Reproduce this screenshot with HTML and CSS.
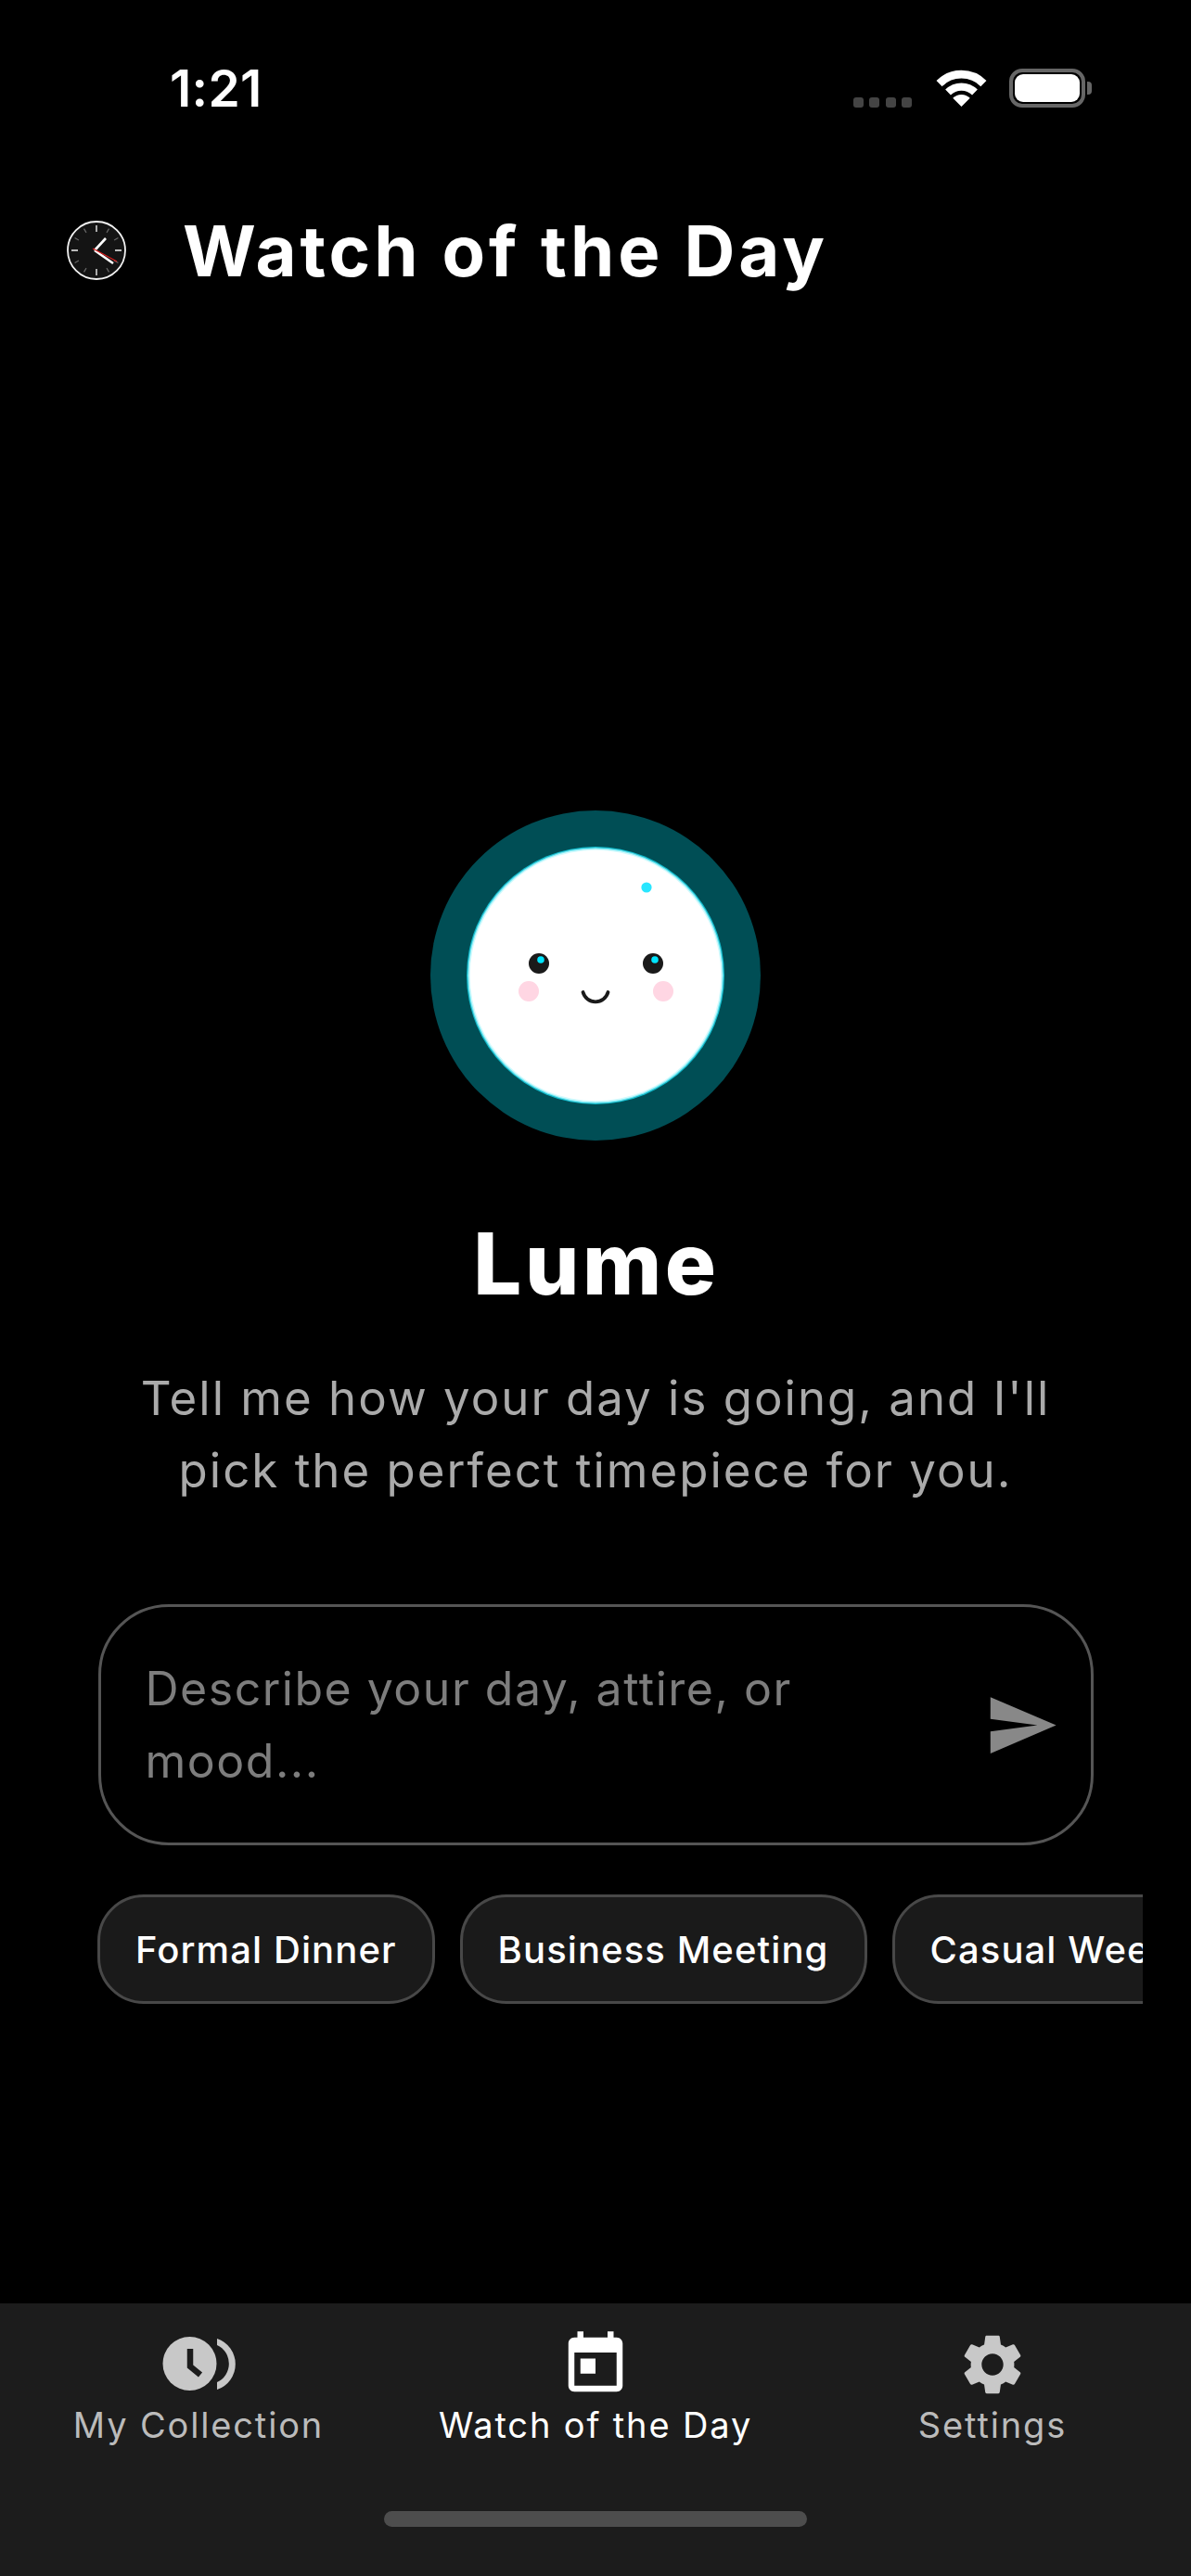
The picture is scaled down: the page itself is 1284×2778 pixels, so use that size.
FILE: index.html
```html
<!DOCTYPE html>
<html lang="en">
<head>
  <meta charset="UTF-8" />
  <meta name="viewport" content="width=device-width, initial-scale=1.0" />
  <title>Watch of the Day</title>
  <link rel="stylesheet" href="styles.css">
</head>
<body>
  <div class="app">
    <!-- status bar -->
    <div class="status">
      <span class="status-time">1:21</span>
      <div class="status-right">
        <div class="signal"><span></span><span></span><span></span><span></span></div>
        <svg class="wifi" viewBox="0 0 55 40">
          <path d="M4.2 15.7A33 33 0 0 1 50.8 15.7" fill="none" stroke="#fff" stroke-width="8.5"/>
          <path d="M13.4 24.9A20 20 0 0 1 41.6 24.9" fill="none" stroke="#fff" stroke-width="8"/>
          <path d="M27.5 40L18.5 31A12.7 12.7 0 0 1 36.5 31Z" fill="#fff"/>
        </svg>
        <div class="battery"><div class="battery-fill"></div></div>
        <div class="battery-tip"></div>
      </div>
    </div>

    <!-- header -->
    <header class="topbar">
      <svg class="clock" viewBox="0 0 64 64">
        <circle cx="32" cy="32" r="31" fill="#141414" stroke="#f2f2f2" stroke-width="1.8"/>
        <g stroke="#bbb" stroke-width="1.8">
          <path d="M32 5v7M32 52v7M5 32h7M52 32h7"/>
        </g>
        <g stroke="#666" stroke-width="1.2">
          <path d="M45.5 8.6l-2.5 4.3M55.4 18.5l-4.3 2.5M55.4 45.5l-4.3-2.5M45.5 55.4l-2.5-4.3M18.5 55.4l2.5-4.3M8.6 45.5l4.3-2.5M8.6 18.5l4.3 2.5M18.5 8.6l2.5 4.3"/>
        </g>
        <path d="M30 32L42 19" stroke="#fff" stroke-width="2.6"/>
        <path d="M30 32L50 46" stroke="#fff" stroke-width="2.6"/>
        <path d="M28 30L54 44" stroke="#e02020" stroke-width="1.1"/>
      </svg>
      <h1>Watch of the Day</h1>
    </header>

    <main class="content">
      <svg class="avatar" viewBox="0 0 356 356">
        <circle cx="178" cy="178" r="178" fill="#004e55"/>
        <circle cx="178" cy="178" r="139" fill="#12b9ca"/>
        <circle cx="178" cy="178" r="137.800" fill="#7feaf4"/>
        <circle cx="178" cy="178" r="136.600" fill="#d4fafd"/>
        <circle cx="178" cy="178" r="135.200" fill="#fff"/>
        <circle cx="233" cy="83" r="5.6" fill="#29e6ff"/>
        <circle cx="117" cy="165" r="11" fill="#1a1a1a"/>
        <circle cx="240" cy="165" r="11" fill="#1a1a1a"/>
        <circle cx="119" cy="161" r="3.8" fill="#00e5ff"/>
        <circle cx="242" cy="161" r="3.8" fill="#00e5ff"/>
        <circle cx="106" cy="195" r="11" fill="#ffd6e3"/>
        <circle cx="251" cy="195" r="11" fill="#ffd6e3"/>
        <path d="M164.500 196A14 14 0 0 0 191.500 196" fill="none" stroke="#1a1a1a" stroke-width="3.800" stroke-linecap="round"/>
      </svg>
      <h2 class="name">Lume</h2>
      <p class="intro">Tell me how your day is going, and I'll<br>pick the perfect timepiece for you.</p>

      <div class="prompt">
        <div class="prompt-text">Describe your day, attire, or<br>mood...</div>
        <svg class="send" viewBox="0 0 24 24"><path d="M2.01 21L23 12 2.01 3 2 10l15 2-15 2z"/></svg>
      </div>

      <div class="chips">
        <button class="chip">Formal Dinner</button>
        <button class="chip">Business Meeting</button>
        <button class="chip">Casual Weekend</button>
      </div>
    </main>

    <!-- bottom tabs -->
    <nav class="tabbar">
      <div class="tabs">
        <a class="tab" href="#">
          <svg class="tab-icon" viewBox="0 0 84 78">
            <circle cx="32.500" cy="38" r="29"/>
            <path d="M62 11A29 29 0 0 1 62 66V58A22 22 0 0 0 62 18Z"/>
            <path class="hands" d="M33 22V41L44 50"/>
          </svg>
          <span>My Collection</span>
        </a>
        <a class="tab active" href="#">
          <svg class="tab-icon" viewBox="0 0 24 24"><path d="M19 3h-1V1h-2v2H8V1H6v2H5c-1.110 0-1.990.9-1.990 2L3 19c0 1.100.89 2 2 2h14c1.100 0 2-.9 2-2V5c0-1.100-.9-2-2-2zm0 16H5V8h14v11zM7 10h5v5H7z"/></svg>
          <span>Watch of the Day</span>
        </a>
        <a class="tab" href="#">
          <svg class="tab-icon" viewBox="0 0 24 24"><path d="M19.14,12.94c0.04-0.3,0.06-0.61,0.06-0.94c0-0.32-0.02-0.64-0.07-0.94l2.03-1.58c0.18-0.14,0.23-0.41,0.12-0.61 l-1.92-3.32c-0.12-0.22-0.37-0.29-0.59-0.22l-2.39,0.96c-0.5-0.38-1.03-0.7-1.62-0.94L14.4,2.81c-0.04-0.24-0.24-0.41-0.48-0.41 h-3.84c-0.24,0-0.43,0.17-0.47,0.41L9.25,5.35C8.66,5.59,8.12,5.92,7.63,6.29L5.24,5.33c-0.22-0.08-0.47,0-0.59,0.22L2.74,8.87 C2.62,9.08,2.66,9.34,2.86,9.48l2.03,1.58C4.84,11.36,4.8,11.69,4.8,12s0.02,0.64,0.07,0.94l-2.03,1.58 c-0.18,0.14-0.23,0.41-0.12,0.61l1.92,3.32c0.12,0.22,0.37,0.29,0.59,0.22l2.39-0.96c0.5,0.38,1.03,0.7,1.62,0.94l0.36,2.54 c0.05,0.24,0.24,0.41,0.48,0.41h3.84c0.24,0,0.44-0.17,0.47-0.41l0.36-2.54c0.59-0.24,1.13-0.56,1.62-0.94l2.39,0.96 c0.22,0.08,0.47,0,0.59-0.22l1.92-3.32c0.12-0.22,0.07-0.47-0.12-0.61L19.14,12.94z M12,15.6c-1.98,0-3.6-1.62-3.6-3.6 s1.62-3.6,3.6-3.6s3.6,1.62,3.6,3.6S13.98,15.6,12,15.6z"/></svg>
          <span>Settings</span>
        </a>
      </div>
      <div class="home-bar"></div>
    </nav>
  </div>
</body>
</html>
```

FILE: styles.css
```css
* { margin: 0; padding: 0; box-sizing: border-box; }
html, body { width: 100%; height: 100%; overflow: hidden; background: #000; font-family: Inter, 'Liberation Sans', sans-serif; }

.app { width: 1284px; height: 2778px; display: flex; flex-direction: column; background: #000; color: #fff; }

/* status bar */
.status { height: 190px; display: flex; align-items: center; justify-content: space-between; padding: 0 107px 0 183px; }
.status-time { font-size: 55px; font-weight: 600; line-height: 1; letter-spacing: 0.3px; }
.status-right { display: flex; align-items: center; }
.signal { display: flex; gap: 6.500px; margin-top: 30px; margin-right: 25px; }
.signal span { width: 11px; height: 11px; border-radius: 3px; background: #444; }
.wifi { width: 57px; height: 41px; margin-right: 23px; margin-top: -2px; }
.battery { width: 82px; height: 42px; border: 4px solid #666; border-radius: 14px; padding: 2px; }
.battery-fill { width: 100%; height: 100%; background: #fff; border-radius: 9px; }
.battery-tip { width: 5px; height: 14px; margin-left: 2px; background: #666; border-radius: 0 4px 4px 0; }

/* header */
.topbar { height: 160px; display: flex; align-items: center; padding-left: 72px; gap: 61px; }
.clock { width: 64px; height: 64px; }
.topbar h1 { font-size: 76px; font-weight: 700; letter-spacing: 3.950px; line-height: 1; }

/* centre */
.content { flex: 1; display: flex; flex-direction: column; align-items: center; padding-top: 524px; }
.avatar { width: 356px; height: 356px; flex: none; }
.name { font-size: 92px; font-weight: 800; letter-spacing: 3.600px; line-height: 1; margin-top: 87px; margin-left: 2px; }
.intro { font-size: 51px; line-height: 78px; letter-spacing: 2px; color: #aaa; text-align: center; margin-top: 60px; }

.prompt { width: 1073px; height: 260px; margin-top: 105px; border: 3px solid #555; border-radius: 76px; display: flex; align-items: center; justify-content: space-between; padding: 0 34px 0 48px; }
.prompt-text { font-size: 50px; line-height: 78px; letter-spacing: 1.500px; color: #7d7d7d; }
.send { width: 81px; height: 81px; fill: #888; flex: none; }

.chips { align-self: flex-start; width: 1127px; margin-left: 105px; margin-top: 53px; display: flex; gap: 27px; overflow: hidden; }
.chip { flex: none; height: 118px; padding: 0 38px; border: 3px solid #484848; border-radius: 50px; background: #1a1a1a; color: #fff; font-family: inherit; font-size: 40px; font-weight: 500; letter-spacing: 1.100px; }

/* tab bar */
.tabbar { height: 294px; background: #1c1c1c; display: flex; flex-direction: column; align-items: center; }
.tabs { width: 100%; display: grid; grid-template-columns: repeat(3, 428px); padding-top: 27px; }
.tab { display: flex; flex-direction: column; align-items: center; color: #bbb; text-decoration: none; font-size: 38px; letter-spacing: 1.850px; line-height: 46px; }
.tab.active { color: #fff; }
.tab-icon { height: 78px; fill: #c8c8c8; }
.tab.active .tab-icon { fill: #fff; }
.tab span { margin-top: 3px; }
.hands { fill: none; stroke: #1c1c1c; stroke-width: 6.500; }
.home-bar { width: 456px; height: 17px; margin-top: 70px; background: #4d4d4d; border-radius: 9px; }
```
